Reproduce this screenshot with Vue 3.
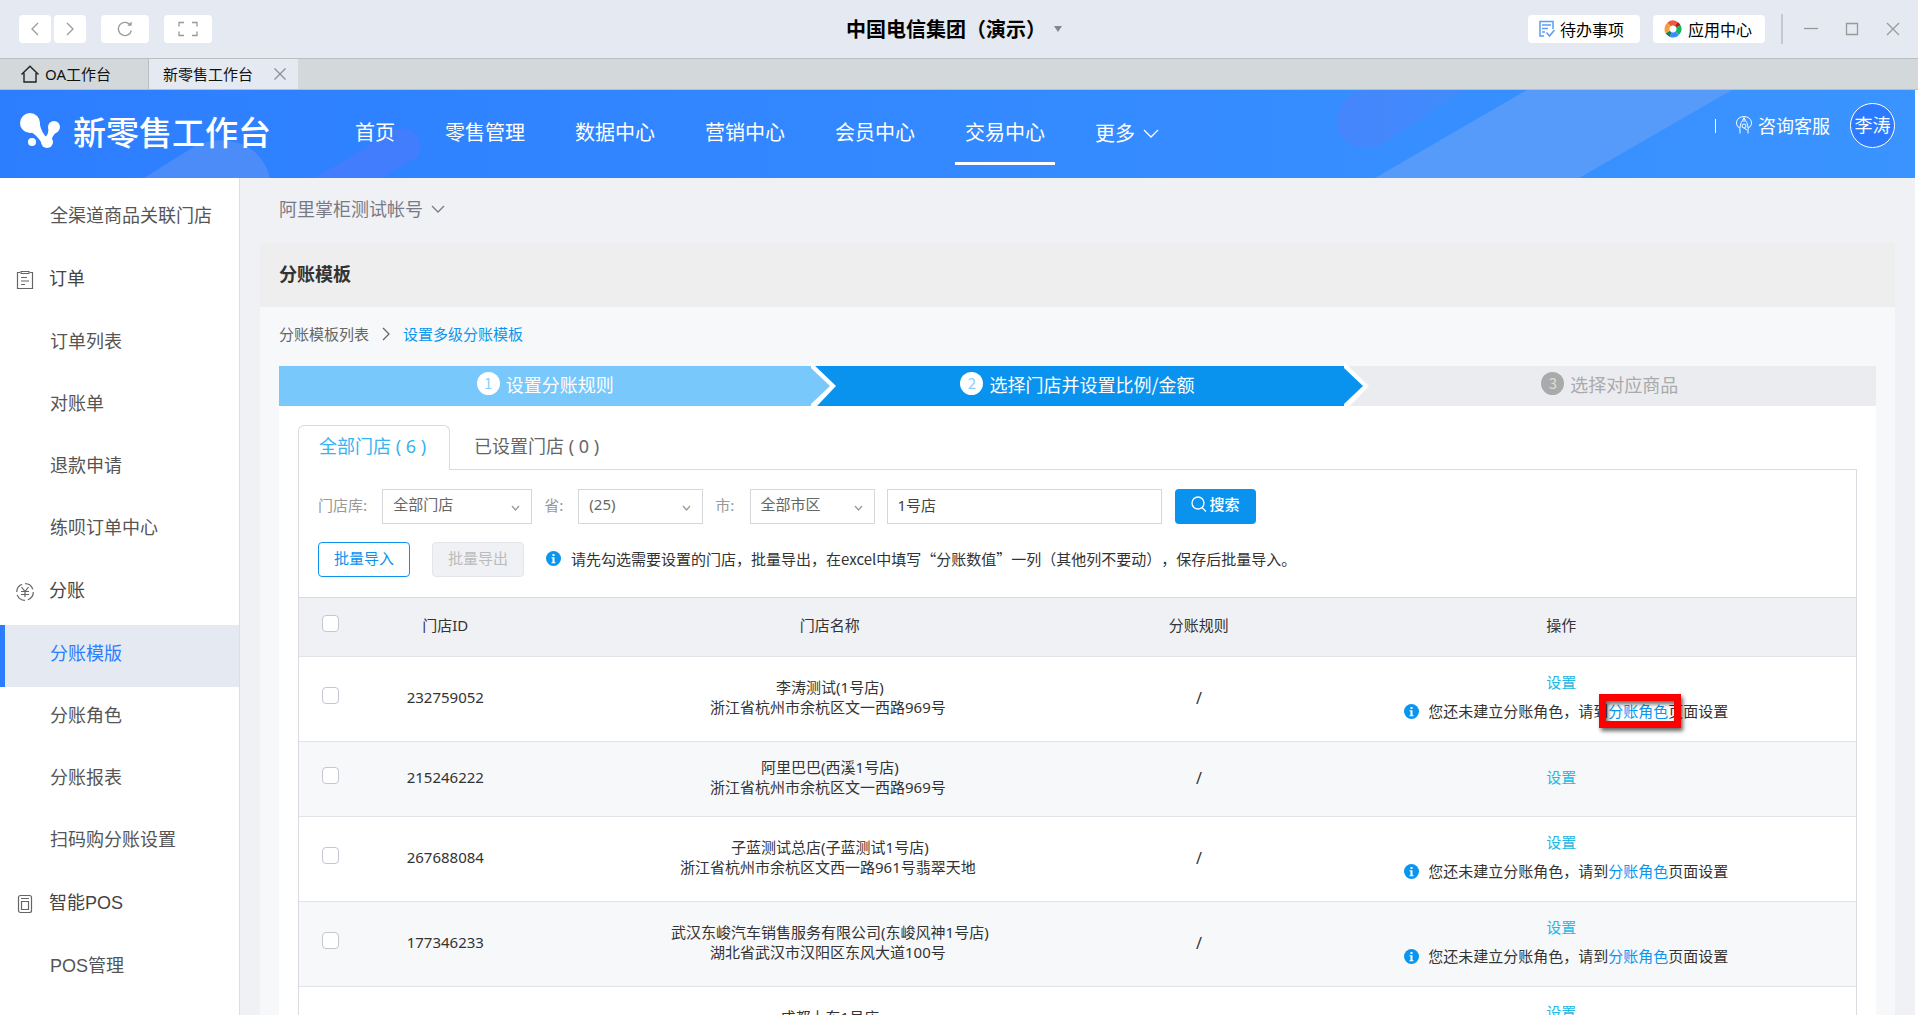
<script setup>
import { ref } from 'vue'

const navItems = ['首页', '零售管理', '数据中心', '营销中心', '会员中心', '交易中心']
const activeNav = ref('交易中心')

const menu = [
  { label: '全渠道商品关联门店' },
  { label: '订单', icon: 'order' },
  { label: '订单列表' },
  { label: '对账单' },
  { label: '退款申请' },
  { label: '练呗订单中心' },
  { label: '分账', icon: 'yen' },
  { label: '分账模版' },
  { label: '分账角色' },
  { label: '分账报表' },
  { label: '扫码购分账设置' },
  { label: '智能POS', icon: 'pos' },
  { label: 'POS管理' },
]
const activeMenu = ref('分账模版')

const steps = [
  { label: '设置分账规则', state: 'done' },
  { label: '选择门店并设置比例/金额', state: 'current' },
  { label: '选择对应商品', state: 'todo' },
]

const keyword = ref('1号店')

const shops = [
  { id: '232759052', name: '李涛测试(1号店)', address: '浙江省杭州市余杭区文一西路969号', missingRole: true, marked: true },
  { id: '215246222', name: '阿里巴巴(西溪1号店)', address: '浙江省杭州市余杭区文一西路969号', missingRole: false },
  { id: '267688084', name: '子蓝测试总店(子蓝测试1号店)', address: '浙江省杭州市余杭区文西一路961号翡翠天地', missingRole: true },
  { id: '177346233', name: '武汉东峻汽车销售服务有限公司(东峻风神1号店)', address: '湖北省武汉市汉阳区东风大道100号', missingRole: true },
  { id: '', name: '成都上东1号店', address: '', missingRole: true },
]
</script>

<template>
  <div class="window">
    <header class="titlebar">
      <div class="tools">
        <button class="tool" aria-label="后退">
          <svg width="10" height="14" viewBox="0 0 10 14"><path d="M8 1 2 7l6 6" /></svg>
        </button>
        <button class="tool" aria-label="前进">
          <svg width="10" height="14" viewBox="0 0 10 14"><path d="m2 1 6 6-6 6" /></svg>
        </button>
        <button class="tool wide" aria-label="刷新">
          <svg width="16" height="16" viewBox="0 0 16 16"><path d="M14.4 9.5A6.6 6.6 0 1 1 12.6 3.2" /><path d="M10.2 4.8h4.4V.6z" class="solid" /></svg>
        </button>
        <button class="tool wide" aria-label="全屏">
          <svg width="20" height="16" viewBox="0 0 20 16"><path d="M1 5.500V1.500h5M14 1.500h5v4M19 10.500v4h-5M6 14.500H1v-4" /></svg>
        </button>
      </div>
      <button class="org">
        中国电信集团（演示）
        <svg width="8" height="6" viewBox="0 0 8 6"><path d="M0 0h8L4 6z" fill="#7f8794" /></svg>
      </button>
      <div class="window-actions">
        <button class="app-button">
          <svg width="18" height="18" viewBox="0 0 18 18" fill="none" stroke="#5b9cf6" stroke-width="1.500">
            <path d="M6 16H2V1.500h13V9M4 5h9M4 8.500h6M4 12h3M8.500 12.500l3 3.500 5-6" />
          </svg>
          待办事项
        </button>
        <button class="app-button app-center">
          <svg width="18" height="18" viewBox="-9 -9 18 18" fill="none" stroke-width="5">
            <path d="M-4 -4.500A6 6 0 0 1 3.300 -5" stroke="#ea5a45" />
            <path d="M3.300 -5A6 6 0 0 1 5.400 -2.600" stroke="#b71c1c" />
            <path d="M5.400 -2.600A6 6 0 0 1 4.200 4.200" stroke="#10b866" />
            <path d="M4.200 4.200A6 6 0 0 1 -2.200 5.600" stroke="#3a8bff" />
            <path d="M-2.200 5.600A6 6 0 0 1 -5.200 3" stroke="#11806a" />
            <path d="M-5.200 3A6 6 0 0 1 -4 -4.500" stroke="#fb9a3c" />
          </svg>
          应用中心
        </button>
        <span class="divider"></span>
        <button class="win" aria-label="最小化"><svg width="14" height="14" viewBox="0 0 14 14"><path d="M0 6.500h14" /></svg></button>
        <button class="win" aria-label="最大化"><svg width="14" height="14" viewBox="0 0 14 14"><path d="M1.500 1.500h11v11h-11z" /></svg></button>
        <button class="win" aria-label="关闭"><svg width="14" height="14" viewBox="0 0 14 14"><path d="m1 1 12 12M13 1 1 13" /></svg></button>
      </div>
    </header>

    <nav class="tabbar" aria-label="工作台">
      <a href="#" class="work-tab home">
        <svg width="20" height="18" viewBox="0 0 20 18" fill="none" stroke="#222" stroke-width="1.400"><path d="M1.500 9.500 10 1.300l8.500 8.200M4 8v9h12V8" /></svg>
        OA工作台
      </a>
      <a href="#" class="work-tab current">
        新零售工作台
        <svg width="12" height="12" viewBox="0 0 12 12" fill="none" stroke="#8a9099" stroke-width="1.300"><path d="m.5.500 11 11M11.500.500l-11 11" /></svg>
      </a>
    </nav>

    <div class="page">
      <header class="banner">
        <svg class="decor left" width="480" height="88" viewBox="0 0 480 88">
          <path d="M144 88 195 56Q219 45 244 55 264 64 270 88z" fill="#4b8cf8" />
          <path d="M315 88 393 41a18 18 0 0 1 24 26L382 88z" fill="#417dfd" />
        </svg>
        <svg class="decor right" width="600" height="88" viewBox="0 0 600 88">
          <defs>
            <linearGradient id="capsule" x1="0" x2="1"><stop offset="0" stop-color="#4685fb" /><stop offset="1" stop-color="#3f8cfd" /></linearGradient>
          </defs>
          <path d="M45 0Q22 10 22 32c0 22 25 32 43 23L151 0z" fill="url(#capsule)" />
          <path d="M60 88 212 0h205L264 88z" fill="#569bf9" />
        </svg>
        <div class="brand">
          <svg width="40" height="36" viewBox="0 0 40 36" fill="#fff">
            <circle cx="10" cy="10" r="10" /><circle cx="34" cy="14" r="6" /><circle cx="27" cy="29" r="6" /><circle cx="12" cy="29" r="4" />
            <path d="M5 18c9 1 12 5 16 11l8-1c-5-7-8-9-9.500-19zM28.500 14c0 7-1 8-5 12l8 4c0-5 1-8 7-12z" />
          </svg>
          新零售工作台
        </div>
        <nav class="main-nav" aria-label="主导航">
          <a v-for="item in navItems" :key="item" href="#" :class="{ active: item === activeNav }" @click.prevent="activeNav = item">{{ item }}</a>
          <a href="#" class="more">更多<svg width="16" height="10" viewBox="0 0 16 10"><path d="m1 1 7 7 7-7" /></svg></a>
        </nav>
        <div class="user">
          <span class="bar"></span>
          <a href="#" class="service">
            <svg width="16" height="18" viewBox="0 0 16 18" fill="none" stroke="#fff" stroke-width="1"><path d="M4 17.500v-5C-2 9 0 .600 8 .600s10 8.400 4 11.900v5M4 12c0-5 2-6 4-10.500C10 6 12 7 12 12M8 2v4" /><circle cx="8" cy="10" r="2" /><path d="m8 12 3 2" /></svg>
            咨询客服
          </a>
          <button class="avatar">李涛</button>
        </div>
      </header>

      <div class="body">
        <aside class="sidebar">
          <a
            v-for="item in menu"
            :key="item.label"
            href="#"
            :class="{ head: item.icon, active: item.label === activeMenu }"
            @click.prevent="activeMenu = item.label"
          >
            <svg v-if="item.icon === 'order'" class="menu-icon" width="18" height="20" viewBox="0 0 18 20"><path d="M4 2.500H1.500v16h15v-16H14M5 1.500h8v2H5zM5 7.500h6M5 11h8M5 14.500h4" /></svg>
            <svg v-else-if="item.icon === 'yen'" class="menu-icon" width="18" height="20" viewBox="0 0 18 20"><circle cx="9" cy="10" r="8.300" stroke-dasharray="10 3" /><path d="m5.500 5 3.500 4.500L12.500 5M5 9.500h8M5 12.500h8M9 9.500V15" /></svg>
            <svg v-else-if="item.icon === 'pos'" class="menu-icon" width="18" height="20" viewBox="0 0 18 20"><rect x="2.500" y="1.500" width="13" height="17" rx="2" /><path d="M5 4.500h8M5.500 7.500h7v8h-7z" /></svg>
            {{ item.label }}
          </a>
        </aside>

        <main class="content">
          <button class="account">
            阿里掌柜测试帐号
            <svg width="14" height="9" viewBox="0 0 14 9"><path d="m1 1 6 6 6-6" /></svg>
          </button>

          <section class="panel">
            <h1>分账模板</h1>
            <div class="panel-body">
              <nav class="crumbs" aria-label="面包屑">
                <a href="#">分账模板列表</a>
                <svg width="8" height="14" viewBox="0 0 8 14"><path d="m1 1 6 6-6 6" /></svg>
                <a href="#" class="here">设置多级分账模板</a>
              </nav>

              <ol class="steps">
                <li v-for="(step, i) in steps" :key="step.label" :class="step.state">
                  <span class="num">{{ i + 1 }}</span>{{ step.label }}
                  <svg v-if="i < 2" class="arrow" width="26" height="44" viewBox="0 0 26 44">
                    <path d="M0 0 25 24 6 44H0z" fill="#fff" />
                    <path d="M0 6 19 24 0 42z" fill="currentColor" />
                  </svg>
                </li>
              </ol>

              <div class="card">
                <div class="tabs" role="tablist">
                  <button role="tab" aria-selected="true" class="tab selected">全部门店 ( 6 )</button>
                  <button role="tab" aria-selected="false" class="tab">已设置门店 ( 0 )</button>
                </div>
                <div class="box">
                  <form class="filters" @submit.prevent>
                    <label for="library">门店库:</label>
                    <span class="select library">
                      <select id="library"><option>全部门店</option></select>
                      <svg width="9" height="6" viewBox="0 0 9 6"><path d="M1 1l3.500 4L8 1" /></svg>
                    </span>
                    <label for="province">省:</label>
                    <span class="select province">
                      <select id="province"><option>(25)</option></select>
                      <svg width="9" height="6" viewBox="0 0 9 6"><path d="M1 1l3.500 4L8 1" /></svg>
                    </span>
                    <label for="city">市:</label>
                    <span class="select city">
                      <select id="city"><option>全部市区</option></select>
                      <svg width="9" height="6" viewBox="0 0 9 6"><path d="M1 1l3.500 4L8 1" /></svg>
                    </span>
                    <input v-model="keyword" class="keyword" type="text" aria-label="门店名称" />
                    <button class="search" type="submit">
                      <svg width="16" height="16" viewBox="0 0 16 16" fill="none" stroke="#fff" stroke-width="1.300"><circle cx="7" cy="7" r="6" /><path d="m11 11.500 4 4" /></svg>
                      搜索
                    </button>
                  </form>
                  <div class="batch">
                    <button class="import">批量导入</button>
                    <button class="export" disabled>批量导出</button>
                    <p class="hint">
                      <svg class="info" width="15" height="15" viewBox="0 0 15 15"><circle cx="7.500" cy="7.500" r="7.500" fill="#0a95ee" /><path d="M6.500 3h2v2h-2zM5.500 6.200h3v5h1v1h-4v-1h1v-4h-1z" fill="#fff" /></svg>
                      请先勾选需要设置的门店，批量导出，在excel中填写“分账数值”一列（其他列不要动），保存后批量导入。
                    </p>
                  </div>

                  <table>
                    <colgroup>
                      <col class="c-check" /><col class="c-id" /><col class="c-name" /><col class="c-rule" /><col />
                    </colgroup>
                    <thead>
                      <tr>
                        <th><input type="checkbox" aria-label="全选" /></th>
                        <th>门店ID</th>
                        <th>门店名称</th>
                        <th>分账规则</th>
                        <th>操作</th>
                      </tr>
                    </thead>
                    <tbody>
                      <tr v-for="shop in shops" :key="shop.name" :class="{ tall: shop.missingRole }">
                        <td><input type="checkbox" :aria-label="shop.name" /></td>
                        <td>{{ shop.id }}</td>
                        <td>{{ shop.name }}<br />{{ shop.address }}&nbsp;</td>
                        <td class="rule">/</td>
                        <td class="ops">
                          <a href="#" class="set">设置</a>
                          <p v-if="shop.missingRole" class="notice">
                            <svg class="info" width="15" height="15" viewBox="0 0 15 15"><circle cx="7.500" cy="7.500" r="7.500" fill="#0a95ee" /><path d="M6.500 3h2v2h-2zM5.500 6.200h3v5h1v1h-4v-1h1v-4h-1z" fill="#fff" /></svg>
                            <span>您还未建立分账角色，请到<a href="#" class="role">分账角色<i v-if="shop.marked" class="mark"></i></a>页面设置</span>
                          </p>
                        </td>
                      </tr>
                    </tbody>
                  </table>
                </div>
              </div>
            </div>
          </section>
        </main>
      </div>
    </div>
  </div>
</template>

<style>
body {
  background: #fff;
}
</style>

<style scoped>
* {
  box-sizing: border-box;
}
.window {
  display: flex;
  flex-direction: column;
  height: 100vh;
  padding-bottom: 5px;
  overflow: hidden;
  font: 15px/20px "Noto Sans CJK SC", sans-serif;
  text-spacing-trim: space-all;
  color: #333;
}
a {
  color: inherit;
  text-decoration: none;
}
button {
  padding: 0;
  border: 0;
  background: none;
  font: inherit;
  color: inherit;
  cursor: pointer;
}
p,
h1,
ol {
  margin: 0;
  padding: 0;
}
svg {
  flex: none;
}

/* window chrome */
.titlebar {
  display: grid;
  grid-template-columns: 1fr auto 1fr;
  align-items: center;
  flex: none;
  height: 58px;
  padding: 0 18px 0 19px;
  background: #e5e9f1;
}
.tools {
  display: flex;
  gap: 3px;
}
.tool {
  display: flex;
  align-items: center;
  justify-content: center;
  width: 32px;
  height: 28px;
  border-radius: 4px;
  background: #fff;
}
.tool.wide {
  width: 48px;
  margin-left: 12px;
}
.tool svg,
.win svg {
  fill: none;
  stroke: #999;
  stroke-width: 1.3;
}
.tool .solid {
  fill: #999;
  stroke: none;
}
.org {
  display: flex;
  align-items: center;
  gap: 8px;
  padding-right: 11px;
  font-size: 20px;
  font-weight: 700;
  color: #000;
}
.window-actions {
  display: flex;
  align-items: center;
  justify-content: flex-end;
}
.app-button {
  display: flex;
  align-items: center;
  gap: 4px;
  width: 112px;
  height: 28px;
  margin-right: 13px;
  padding-left: 10px;
  border-radius: 4px;
  background: #fff;
  font-size: 16px;
  color: #000;
}
.app-center {
  gap: 6px;
  margin-right: 16px;
  padding-left: 11px;
}
.divider {
  width: 2px;
  height: 30px;
  margin-right: 21px;
  background: #c5c8ce;
}
.win {
  display: flex;
  margin-left: 27px;
}
.divider + .win {
  margin-left: 0;
}
.tabbar {
  display: flex;
  flex: none;
  height: 32px;
  border-top: 1px solid #b9bec3;
  border-bottom: 1px solid #b9bec3;
  background: #d3d8db;
}
.work-tab {
  display: flex;
  align-items: center;
  width: 149px;
  font-family: "Noto Sans", "Noto Sans CJK SC", sans-serif;
  color: #111;
}
.home {
  gap: 5px;
  padding-left: 20px;
  border-right: 1px solid #b9bec3;
}
.work-tab.current {
  justify-content: space-between;
  padding: 0 12px 0 14px;
  background: #e5e9f1;
}

/* blue banner */
.page {
  display: flex;
  flex-direction: column;
  flex: 1;
  min-height: 0;
  margin-right: 3px;
}
.banner {
  position: relative;
  display: flex;
  flex: none;
  height: 88px;
  background: linear-gradient(90deg, #2d7eff, #3a94ff);
  color: #fff;
}
.decor {
  position: absolute;
  top: 0;
}
.decor.left {
  left: 0;
}
.decor.right {
  right: 0;
}
.brand,
.main-nav,
.user {
  position: relative;
  display: flex;
  align-items: center;
}
.brand {
  gap: 13px;
  width: 355px;
  padding: 0 0 6px 20px;
  font-size: 33px;
  font-weight: 500;
  line-height: 40px;
}
.main-nav {
  align-items: flex-start;
  gap: 30px;
  margin-left: -10px;
  font-size: 20px;
}
.main-nav a {
  height: 75px;
  padding: 0 10px;
  border-bottom: 3px solid transparent;
  line-height: 84px;
}
.main-nav a.active {
  border-color: #fff;
}
.main-nav .more {
  display: flex;
  align-items: flex-start;
  gap: 8px;
  line-height: 86px;
}
.more svg {
  margin-top: 39px;
}
.more svg,
.account svg,
.crumbs svg,
.select svg {
  fill: none;
  stroke: currentColor;
  stroke-width: 1.3;
}
.user {
  gap: 20px;
  height: 71px;
  margin-left: auto;
  padding-right: 20px;
  font-size: 18px;
}
.bar {
  width: 1px;
  height: 14px;
  background: #fff;
}
.service {
  display: flex;
  align-items: center;
  gap: 6px;
  padding-bottom: 2px;
}
.avatar {
  width: 45px;
  height: 45px;
  padding-bottom: 4px;
  border: 1px solid #fff;
  border-radius: 50%;
  background: #2b7aff;
}

/* sidebar */
.body {
  display: flex;
  flex: 1;
  min-height: 0;
}
.sidebar {
  flex: none;
  width: 240px;
  padding-top: 9px;
  border-right: 1px solid #dcdee5;
  background: #fff;
  font-family: "Liberation Sans", "Noto Sans CJK SC", sans-serif;
  font-size: 18px;
  color: #555;
  overflow: hidden;
}
.sidebar a {
  position: relative;
  display: block;
  height: 62px;
  padding-left: 50px;
  line-height: 59px;
}
.sidebar .head {
  height: 64px;
  padding-left: 49px;
  line-height: 61px;
  color: #444;
}
.sidebar .active {
  background: #e4e9f2;
  box-shadow: inset 5px 0 #2d7dff;
  color: #2d7dff;
}
.menu-icon {
  position: absolute;
  left: 16px;
  top: 21px;
  fill: none;
  stroke: #666;
  stroke-width: 1.2;
}

/* content */
.content {
  flex: 1;
  min-width: 0;
  padding: 0 20px;
  background: #f0f1f5;
  overflow: hidden;
}
.account {
  display: flex;
  align-items: center;
  gap: 8px;
  height: 65px;
  margin-left: 19px;
  padding-bottom: 5px;
  font-size: 18px;
  color: #777a85;
}
.account svg {
  margin-top: 2px;
}
h1 {
  height: 64px;
  padding-left: 19px;
  background: #eee;
  font-size: 18px;
  font-weight: 700;
  line-height: 60px;
}
.panel-body {
  padding: 0 19px;
  background: #f7f8fa;
}
.crumbs {
  display: flex;
  align-items: center;
  gap: 13px;
  height: 59px;
  padding-bottom: 6px;
  color: #666;
}
.crumbs .here {
  color: #0a95ee;
}
.steps {
  display: flex;
  list-style: none;
  font-size: 18px;
}
.steps li {
  position: relative;
  display: flex;
  align-items: center;
  justify-content: center;
  gap: 6px;
  flex: 1;
  height: 40px;
  padding-bottom: 5px;
  color: #fff;
}
.num {
  width: 23px;
  height: 23px;
  border-radius: 50%;
  background: #fff;
  font-size: 15px;
  line-height: 22px;
  text-align: center;
  color: #8fd0fb;
}
.steps .done {
  z-index: 2;
  background: #78c8fb;
}
.steps .current {
  z-index: 1;
  background: #0a93ee;
}
.steps .todo {
  background: #ebecf0;
  color: #aaa;
}
.todo .num {
  background: #aaa;
  color: #ddd;
}
.arrow {
  position: absolute;
  left: 100%;
  top: -4px;
}
.done .arrow {
  color: #78c8fb;
}
.current .arrow {
  color: #0a93ee;
}
.card {
  padding: 19px 19px 0;
  background: #fff;
}
.tabs {
  position: relative;
  display: flex;
  margin-bottom: -1px;
}
.tab {
  height: 45px;
  padding: 0 24px 3px;
  font-family: "Noto Sans", "Noto Sans CJK SC", sans-serif;
  font-size: 18px;
  color: #666;
}
.tab.selected {
  min-width: 152px;
  padding: 0 20px 4px;
  border: 1px solid #d9dbe0;
  border-bottom: 0;
  border-radius: 6px 6px 0 0;
  background: #fff;
  text-align: left;
  color: #36b3f0;
}
.box {
  border: 1px solid #d9dbe0;
}
.filters {
  display: flex;
  align-items: center;
  height: 54px;
  padding: 19px 19px 0;
  color: #999;
}
.filters label {
  padding-bottom: 4px;
}
.select {
  position: relative;
  height: 35px;
  margin: 0 12px 0 15px;
}
.select select,
.keyword {
  width: 100%;
  height: 35px;
  padding: 0 10px 5px;
  border: 1px solid #d5d7dc;
  border-radius: 0;
  background: #fff;
  font: 15px/20px "Noto Sans", "Noto Sans CJK SC", sans-serif;
  color: #666;
  appearance: none;
}
.select svg {
  position: absolute;
  right: 12px;
  top: 16px;
  pointer-events: none;
}
.library {
  width: 150px;
}
.province,
.city {
  width: 125px;
}
.filters .keyword {
  width: 275px;
  color: #444;
}
.search {
  display: flex;
  align-items: center;
  justify-content: center;
  gap: 3px;
  width: 81px;
  height: 35px;
  margin-left: 13px;
  padding-bottom: 5px;
  border-radius: 4px;
  background: #0a93ee;
  font-weight: 500;
  color: #fff;
}
.batch {
  display: flex;
  align-items: center;
  padding: 18px 19px 20px;
}
.import,
.export {
  width: 92px;
  height: 35px;
  padding-bottom: 3px;
  border: 1px solid #0a93ee;
  border-radius: 4px;
  color: #0a93ee;
}
.export {
  margin: 0 22px;
  border-color: #e3e5ea;
  background: #f0f1f5;
  color: #bbb;
}
.hint {
  display: flex;
  align-items: center;
  gap: 10px;
  padding-bottom: 2px;
}

/* table */
table {
  width: 100%;
  table-layout: fixed;
  border-collapse: collapse;
  text-align: center;
  font-family: "Noto Sans", "Noto Sans CJK SC", sans-serif;
}
.c-check {
  width: 63px;
}
.c-id {
  width: 10.7%;
}
.c-name {
  width: 38.7%;
}
.c-rule {
  width: 8.7%;
}
th,
td {
  padding: 0 0 4px;
  border-bottom: 1px solid #e1e3e8;
}
th {
  height: 59px;
  border-top: 1px solid #d9dbe0;
  background: #f0f1f5;
  font-weight: 400;
}
td {
  height: 75px;
}
.tall td {
  height: 85px;
}
tbody tr:nth-child(even) {
  background: #f7f8fa;
}
input[type="checkbox"] {
  display: block;
  width: 17px;
  height: 17px;
  margin: 0 auto 4px;
  border: 1px solid #c4c7d0;
  border-radius: 4px;
  background: #fff;
  appearance: none;
}
.rule {
  padding-bottom: 2px;
  font-size: 16px;
}
.set {
  display: block;
  line-height: 29px;
  color: #23b7e5;
}
.notice {
  display: flex;
  align-items: center;
  justify-content: center;
  gap: 9px;
  padding-left: 10px;
  line-height: 29px;
}
.role {
  position: relative;
  color: #0a95ee;
}
.mark {
  position: absolute;
  inset: -7px -13px -7px -9px;
  border: 7px solid #f00;
  box-shadow: 2px 3px 4px rgba(0, 0, 0, 0.6), inset 2px 3px 4px rgba(0, 0, 0, 0.6);
}
</style>
